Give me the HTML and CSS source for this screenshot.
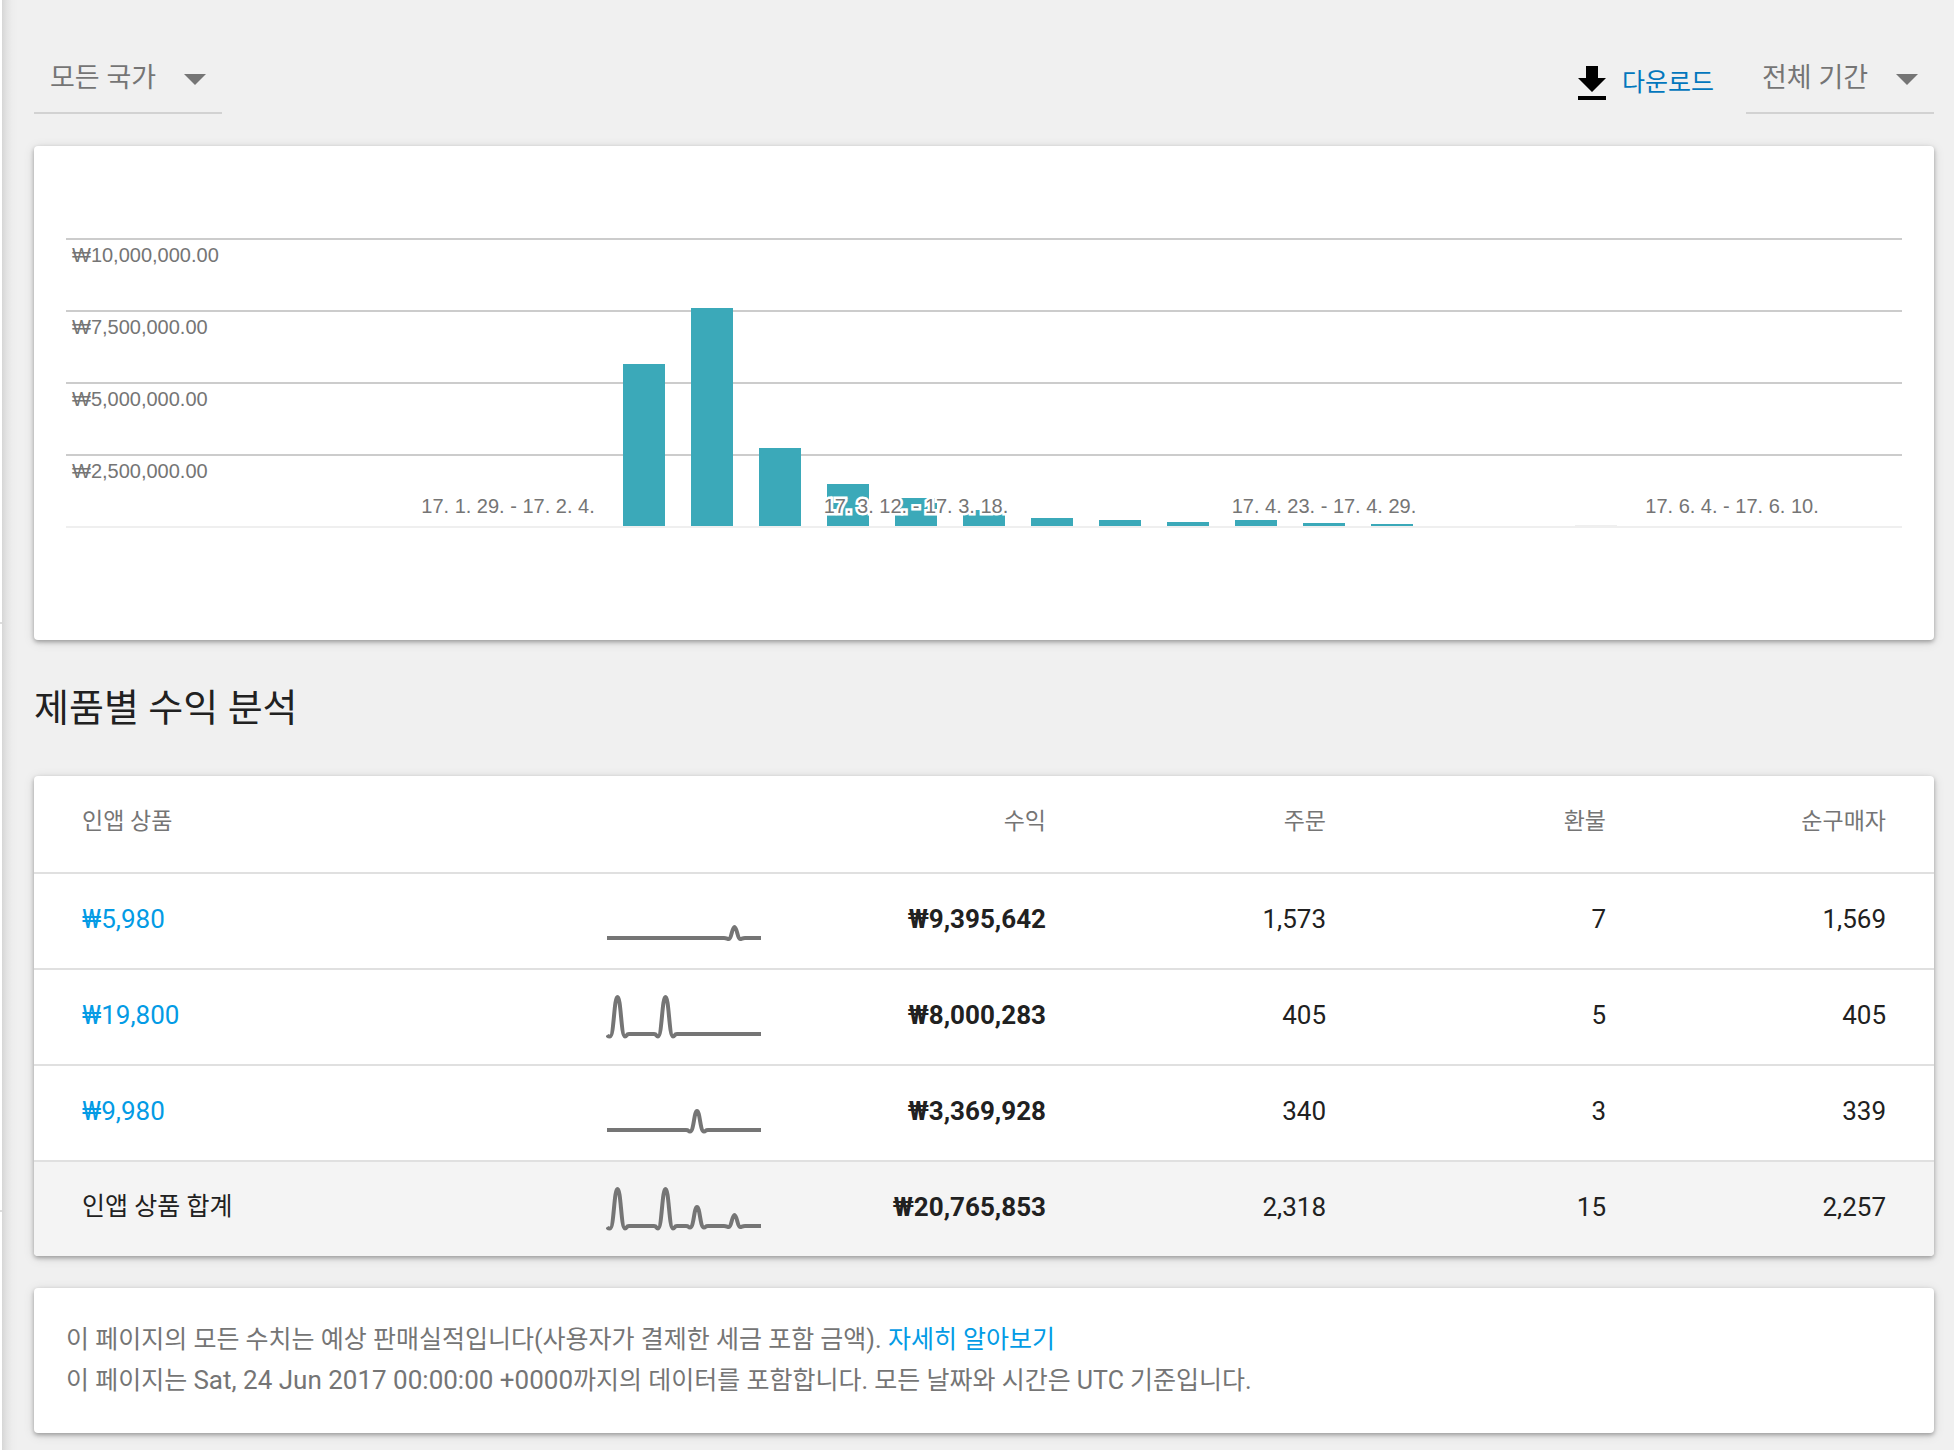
FILE: index.html
```html
<!DOCTYPE html>
<html lang="ko">
<head>
<meta charset="utf-8">
<meta name="viewport" content="width=device-width, initial-scale=1">
<title>제품별 수익 분석</title>
<link rel="stylesheet" href="styles.css">
</head>
<body>
<div class="rail"><div class="rail-top"></div><div class="rail-mid"></div></div>
<main class="page">
  <header class="toolbar">
    <div class="picker">
      <select class="picker-input" aria-label="국가"><option>모든 국가</option></select>
      <svg class="picker-arrow" viewBox="0 0 22 12" aria-hidden="true"><path d="M0 0h22L11 11z"/></svg>
    </div>
    <a class="download" href="#">
      <svg class="download-icon" viewBox="0 0 28 34" aria-hidden="true"><path d="M8 0h12v12h8L14 26 0 12h8zM0 30h28v4H0z"/></svg>
      <span class="download-label">다운로드</span>
    </a>
    <div class="picker">
      <select class="picker-input" aria-label="기간"><option>전체 기간</option></select>
      <svg class="picker-arrow" viewBox="0 0 22 12" aria-hidden="true"><path d="M0 0h22L11 11z"/></svg>
    </div>
  </header>

  <section class="card chart-card">
    <div class="chart">
      <div class="chart-scale">
        <div class="tick">₩10,000,000.00</div>
        <div class="tick">₩7,500,000.00</div>
        <div class="tick">₩5,000,000.00</div>
        <div class="tick">₩2,500,000.00</div>
      </div>
      <div class="chart-bars">
        <i></i><i></i><i></i><i></i><i></i><i></i><i></i><i></i>
        <i style="height:162px"></i><i style="height:218px"></i><i style="height:78px"></i><i style="height:42px"></i>
        <i style="height:28px"></i><i style="height:16px"></i><i style="height:8px"></i><i style="height:6px"></i>
        <i style="height:4px"></i><i style="height:6px"></i><i style="height:3px"></i><i style="height:2px"></i>
        <i></i><i></i><i class="faint" style="height:1px"></i><i></i><i></i><i></i><i></i>
      </div>
      <div class="chart-dates">
        <span style="grid-column:5 / span 5">17. 1. 29. - 17. 2. 4.</span>
        <span style="grid-column:11 / span 5">17. 3. 12. - 17. 3. 18.</span>
        <span style="grid-column:17 / span 5">17. 4. 23. - 17. 4. 29.</span>
        <span style="grid-column:23 / span 5">17. 6. 4. - 17. 6. 10.</span>
      </div>
    </div>
  </section>

  <h1 class="title">제품별 수익 분석</h1>

  <section class="card">
    <table class="products">
      <colgroup><col><col class="col-trend"><col class="col-num"><col class="col-num"><col class="col-num"><col class="col-num"></colgroup>
      <thead>
        <tr><th scope="col" class="name">인앱 상품</th><td></td><th scope="col">수익</th><th scope="col">주문</th><th scope="col">환불</th><th scope="col">순구매자</th></tr>
      </thead>
      <tbody>
        <tr>
          <td class="name"><a href="#">₩5,980</a></td>
          <td class="trend"><svg viewBox="0 0 158 48" aria-hidden="true"><path d="M1 41H118C121 41 121 42 123 42C125.500 42 126 30 128.500 30S131.500 42 134 42C136 42 136 41 139 41H155"/></svg></td>
          <td class="revenue">₩9,395,642</td><td>1,573</td><td>7</td><td>1,569</td>
        </tr>
        <tr>
          <td class="name"><a href="#">₩19,800</a></td>
          <td class="trend"><svg viewBox="0 0 158 48" aria-hidden="true"><path d="M1 42C2 43.500 3 43.500 4 43.500C8 43.500 8 4 11.500 4S15 43.500 19 43.500C21 43.500 20 41 23 41H48C51 41 50 43.500 52 43.500C56 43.500 56 4 59.500 4S63 43.500 67 43.500C69 43.500 68 41 71 41H155"/></svg></td>
          <td class="revenue">₩8,000,283</td><td>405</td><td>5</td><td>405</td>
        </tr>
        <tr>
          <td class="name"><a href="#">₩9,980</a></td>
          <td class="trend"><svg viewBox="0 0 158 48" aria-hidden="true"><path d="M1 41H80C83 41 82 42.500 84 42.500C88 42.500 88 22 91 22S94 42.500 98 42.500C100 42.500 99 41 102 41H155"/></svg></td>
          <td class="revenue">₩3,369,928</td><td>340</td><td>3</td><td>339</td>
        </tr>
      </tbody>
      <tfoot>
        <tr>
          <td class="name">인앱 상품 합계</td>
          <td class="trend"><svg viewBox="0 0 158 48" aria-hidden="true"><path d="M1 42C2 43.500 3 43.500 4 43.500C8 43.500 8 4 11.500 4S15 43.500 19 43.500C21 43.500 20 41 23 41H48C51 41 50 43.500 52 43.500C56 43.500 56 4 59.500 4S63 43.500 67 43.500C69 43.500 68 41 71 41H80C83 41 82 42.500 84 42.500C88 42.500 88 22 91 22S94 42.500 98 42.500C100 42.500 99 41 102 41H118C121 41 121 42 123 42C125.500 42 126 30 128.500 30S131.500 42 134 42C136 42 136 41 139 41H155"/></svg></td>
          <td class="revenue">₩20,765,853</td><td>2,318</td><td>15</td><td>2,257</td>
        </tr>
      </tfoot>
    </table>
  </section>

  <section class="card note">
    <p>이 페이지의 모든 수치는 예상 판매실적입니다(사용자가 결제한 세금 포함 금액). <a href="#">자세히 알아보기</a></p>
    <p>이 페이지는 <time>Sat, 24 Jun 2017 00:00:00 +0000</time>까지의 데이터를 포함합니다. 모든 날짜와 시간은 UTC 기준입니다.</p>
  </section>
</main>
</body>
</html>
```
FILE: styles.css
```css
* { box-sizing: border-box; }

body {
  margin: 0;
  display: flex;
  min-height: 100vh;
  background: #f0f0f0;
  color: #212121;
  font-family: Roboto, "Noto Sans CJK KR", sans-serif;
  font-size: 26px;
}

a { color: #039be5; text-decoration: none; }

.rail { width: 2px; background: #fff; }
.rail-top { height: 624px; border-bottom: 2px solid #ddd; }
.rail-mid { height: 588px; border-bottom: 2px solid #ddd; }

.page {
  flex: 1;
  min-width: 0;
  padding: 40px 20px 18px 32px;
  background: linear-gradient(to right, #d6d6d6, #e4e4e4 5px, #ededed 10px, #f0f0f0 16px);
}

.toolbar { display: flex; align-items: flex-start; height: 74px; margin-bottom: 32px; }

.picker { position: relative; width: 188px; }
.picker-input {
  display: block;
  width: 100%;
  height: 74px;
  padding: 4px 48px 0 16px;
  border: 0;
  border-bottom: 2px solid #d2d2d2;
  border-radius: 0;
  background: none;
  appearance: none;
  color: #757575;
  font: inherit;
  font-size: 27px;
}
.picker-arrow {
  position: absolute;
  right: 16px;
  top: 34px;
  width: 22px;
  height: 12px;
  fill: #757575;
  pointer-events: none;
}

.download {
  display: flex;
  align-items: center;
  gap: 16px;
  height: 86px;
  margin: 0 32px 0 auto;
  color: #0277bd;
  font-size: 25px;
}
.download-label { padding-bottom: 6px; }
.download-icon { width: 28px; height: 34px; fill: #000; }

.card {
  background: #fff;
  border-radius: 4px;
  box-shadow: 0 2px 4px rgba(0, 0, 0, .3), 0 2px 12px rgba(0, 0, 0, .12);
}

.chart-card { padding: 92px 32px 112px; }
.chart {
  display: grid;
  border-bottom: 2px solid #efefef;
  color: #757575;
  font: 20px/24px "Liberation Sans", Arial, sans-serif;
}
.chart > div { grid-area: 1 / 1; }
.tick { height: 72px; padding: 3px 6px; border-top: 2px solid #ccc; }
.chart-bars,
.chart-dates { display: grid; grid-template-columns: repeat(27, minmax(0, 1fr)); align-items: end; justify-items: center; }
.chart-bars i { width: 42px; background: #3ba9b9; }
.chart-bars .faint { background: #efefef; }
.chart-dates { padding-bottom: 8px; }
.chart-dates span {
  white-space: nowrap;
  -webkit-text-stroke: 5px #fff;
  paint-order: stroke fill;
}

.title { margin: 34px 0; font-size: 38px; font-weight: 400; line-height: 68px; }

.products { width: 100%; border-collapse: separate; border-spacing: 0; table-layout: fixed; }
.col-trend { width: 240px; }
.col-num { width: 280px; }
.products td, .products th { height: 96px; padding: 0 48px 4px 0; text-align: right; line-height: 32px; }
.products th { color: #757575; font-size: 23px; font-weight: 400; }
.products tbody td, .products tfoot td { border-top: 2px solid #e0e0e0; }
.products .name { padding-left: 48px; text-align: left; }
.products .trend { padding: 0 0 0 32px; text-align: left; }
.trend svg { display: block; width: 158px; height: 48px; fill: none; stroke: #757575; stroke-width: 4; }
.products .revenue { font-weight: 700; }
.products tfoot td { background: #f4f4f4; }
.products tfoot .name { font-size: 25px; }
.products tfoot td:first-child { border-bottom-left-radius: 4px; }
.products tfoot td:last-child { border-bottom-right-radius: 4px; }

.note { margin-top: 32px; padding: 32px; color: #757575; font-size: 25px; }
.note p { margin: 0; line-height: 40px; }
.note time { font-size: 26px; }
```
